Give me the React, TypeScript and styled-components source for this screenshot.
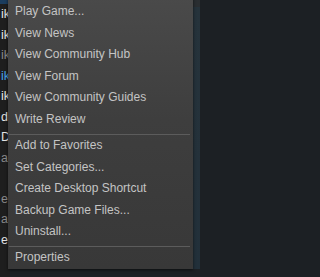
import React from "react";
import styled, { createGlobalStyle } from "styled-components";

const Global = createGlobalStyle`
  html, body { margin: 0; padding: 0; background: #1c2024; }
  body { font-family: "Liberation Sans", Arial, sans-serif; }
`;

const Screen = styled.div`
  position: relative;
  width: 200px;
  height: 277px;
  overflow: hidden;
  display: flex;
  background: #1c2024;
`;

const Library = styled.div`
  width: 10px;
  flex: none;
  background: #1e1e1e;
  display: flex;
  flex-direction: column;
  overflow: hidden;
`;

const SelectedStrip = styled.div`
  height: 4px;
  flex: none;
  background: #1b3d5e;
`;

const GameRow = styled.div<{ $tone: "white" | "grey" | "blue" }>`
  height: 20.5px;
  flex: none;
  display: flex;
  align-items: center;
  justify-content: flex-start;
  padding-left: 1px;
  white-space: nowrap;
  font-size: 12.5px;
  color: ${(p) =>
    p.$tone === "white" ? "#e4e4e4" : p.$tone === "blue" ? "#4aa3e8" : "#8a8a8a"};
`;

const Main = styled.div`
  flex: 1;
  display: flex;
  flex-direction: column;
`;

const TopBar = styled.div`
  height: 7px;
  flex: none;
  background: #2a2e31;
`;

const Content = styled.div`
  flex: 1;
  background: linear-gradient(180deg, #26333b 0%, #24313a 60%, #22303a 100%);
`;

const Footer = styled.div`
  height: 8px;
  flex: none;
  background: #1c2024;
`;

const Menu = styled.div`
  position: absolute;
  left: 8px;
  top: -3px;
  width: 185px;
  height: 272px;
  padding-top: 4px;
  box-sizing: border-box;
  background: linear-gradient(180deg, #4a4a4a 0%, #3e3e3e 45%, #383838 100%);
  box-shadow: 0 1px 3px rgba(0, 0, 0, 0.6);
  display: flex;
  flex-direction: column;
`;

const Item = styled.div`
  height: 21.6px;
  flex: none;
  line-height: 21.6px;
  padding-left: 7px;
  font-size: 12px;
  color: #c4c4c4;
  white-space: nowrap;
`;

const Separator = styled.div`
  height: 1px;
  flex: none;
  margin: 3px 3px 0.4px 1px;
  background: #5c5c5c;
`;

const games: { text: string; tone: "white" | "grey" | "blue" }[] = [
  { text: "ik", tone: "white" },
  { text: "ik", tone: "white" },
  { text: "ik", tone: "grey" },
  { text: "ik", tone: "blue" },
  { text: "ik", tone: "white" },
  { text: "d", tone: "white" },
  { text: "Da", tone: "white" },
  { text: "at", tone: "grey" },
  { text: "", tone: "grey" },
  { text: "er", tone: "grey" },
  { text: "at", tone: "grey" },
  { text: "es", tone: "white" },
  { text: "", tone: "grey" },
  { text: "or", tone: "grey" },
];

const groups = [
  [
    "Play Game...",
    "View News",
    "View Community Hub",
    "View Forum",
    "View Community Guides",
    "Write Review",
  ],
  [
    "Add to Favorites",
    "Set Categories...",
    "Create Desktop Shortcut",
    "Backup Game Files...",
    "Uninstall...",
  ],
  ["Properties"],
];

export default function App() {
  return (
    <>
      <Global />
      <Screen>
        <Library>
          <SelectedStrip />
          {games.map((g, i) => (
            <GameRow key={i} $tone={g.tone}>
              {g.text}
            </GameRow>
          ))}
        </Library>
        <Main>
          <TopBar />
          <Content />
          <Footer />
        </Main>
        <Menu>
          {groups.map((grp, gi) => (
            <React.Fragment key={gi}>
              {gi > 0 && <Separator />}
              {grp.map((label) => (
                <Item key={label}>{label}</Item>
              ))}
            </React.Fragment>
          ))}
        </Menu>
      </Screen>
    </>
  );
}
